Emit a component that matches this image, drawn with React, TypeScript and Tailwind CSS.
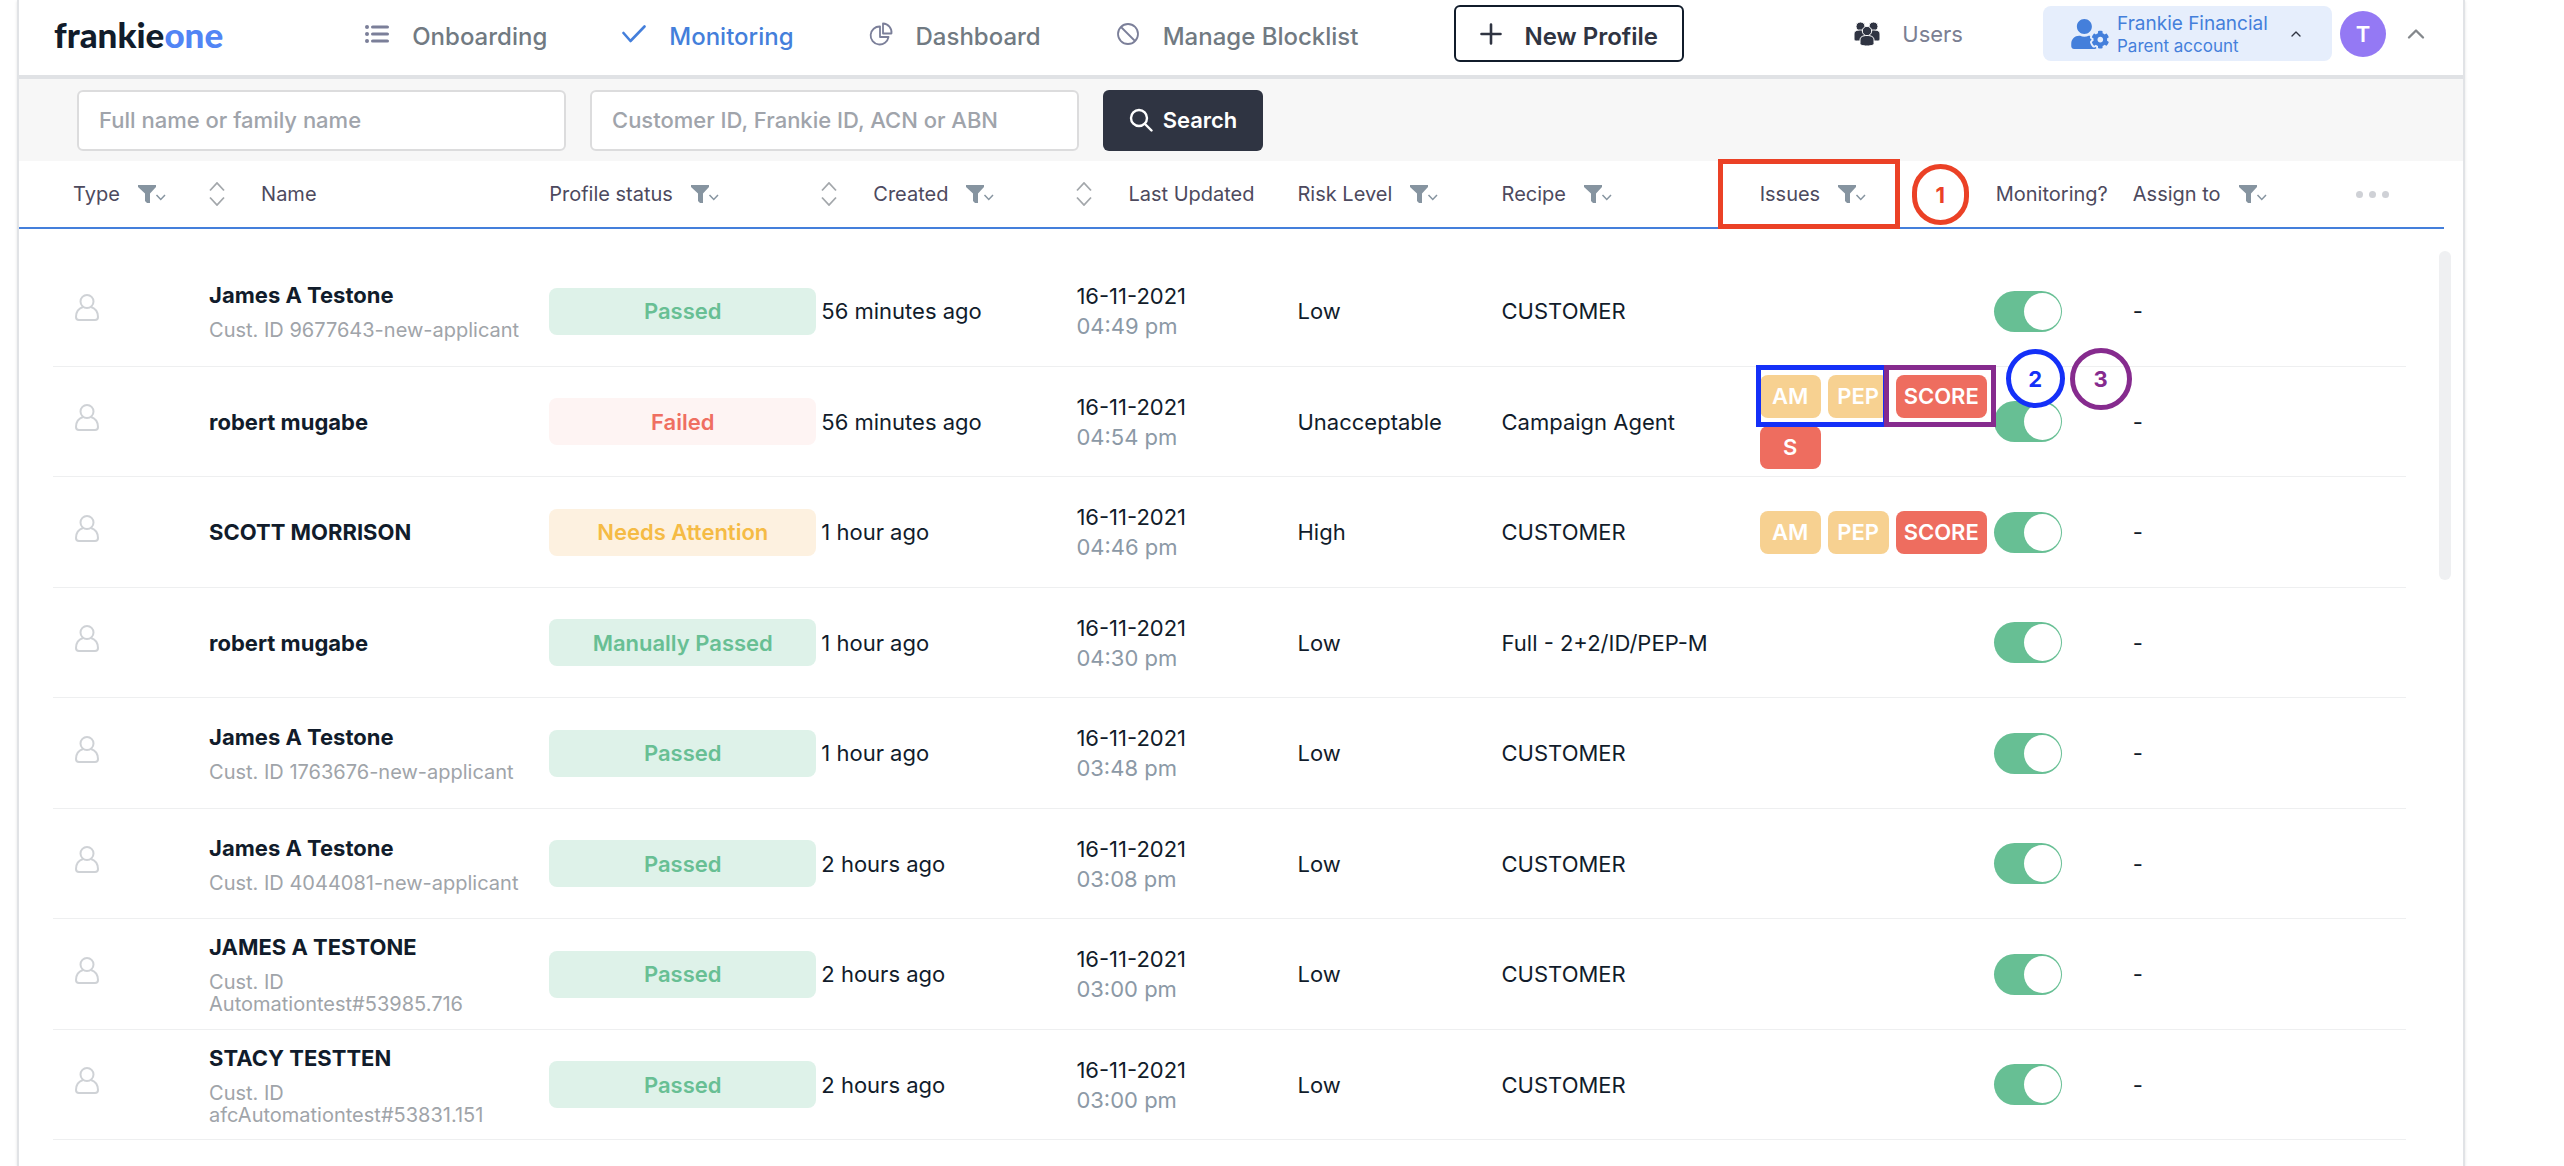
import type { ReactNode } from "react";
import { ChevronUp } from "lucide-react";
import { FaUserCog } from "react-icons/fa";
import clsx from "clsx";

type Status = "Passed" | "Failed" | "Needs Attention" | "Manually Passed";

interface Profile {
  name: string;
  customerId?: string;
  status: Status;
  created: string;
  updatedAt: string;
  risk: string;
  recipe: string;
  issues?: string[];
  annotated?: boolean;
}

const profiles: Profile[] = [
  { name: "James A Testone", customerId: "9677643-new-applicant", status: "Passed", created: "56 minutes ago", updatedAt: "04:49 pm", risk: "Low", recipe: "CUSTOMER" },
  { name: "robert mugabe", status: "Failed", created: "56 minutes ago", updatedAt: "04:54 pm", risk: "Unacceptable", recipe: "Campaign Agent", issues: ["AM", "PEP", "SCORE", "S"], annotated: true },
  { name: "SCOTT MORRISON", status: "Needs Attention", created: "1 hour ago", updatedAt: "04:46 pm", risk: "High", recipe: "CUSTOMER", issues: ["AM", "PEP", "SCORE"] },
  { name: "robert mugabe", status: "Manually Passed", created: "1 hour ago", updatedAt: "04:30 pm", risk: "Low", recipe: "Full - 2+2/ID/PEP-M" },
  { name: "James A Testone", customerId: "1763676-new-applicant", status: "Passed", created: "1 hour ago", updatedAt: "03:48 pm", risk: "Low", recipe: "CUSTOMER" },
  { name: "James A Testone", customerId: "4044081-new-applicant", status: "Passed", created: "2 hours ago", updatedAt: "03:08 pm", risk: "Low", recipe: "CUSTOMER" },
  { name: "JAMES A TESTONE", customerId: "Automationtest#53985.716", status: "Passed", created: "2 hours ago", updatedAt: "03:00 pm", risk: "Low", recipe: "CUSTOMER" },
  { name: "STACY TESTTEN", customerId: "afcAutomationtest#53831.151", status: "Passed", created: "2 hours ago", updatedAt: "03:00 pm", risk: "Low", recipe: "CUSTOMER" },
];

const statusStyles: Record<Status, string> = {
  Passed: "bg-[#def2e9] text-[#68bf94]",
  "Manually Passed": "bg-[#def2e9] text-[#68bf94]",
  Failed: "bg-[#fef4f3] text-[#ef6f61]",
  "Needs Attention": "bg-[#fdf1e0] text-[#f5bb45]",
};

function ListIcon() {
  return (
    <svg viewBox="0 0 24 18" className="h-[18px] w-6" fill="#7b7f99">
      {[0, 7, 14].map((y) => (
        <g key={y}>
          <rect x="0" y={y} width="4" height="4" rx="2" />
          <rect x="6" y={y + 0.4} width="18" height="3.2" rx="1.6" />
        </g>
      ))}
    </svg>
  );
}

function CheckIcon() {
  return (
    <svg viewBox="0 0 24 18" className="h-[18px] w-6" fill="none" stroke="currentColor" strokeWidth="2.6" strokeLinecap="round" strokeLinejoin="round">
      <path d="M1.500 8l7 8L22.500 1.500" />
    </svg>
  );
}

function PieIcon() {
  return (
    <svg viewBox="0 0 24 24" className="size-6" fill="none" stroke="#7b7f99" strokeWidth="1.8" strokeLinejoin="round">
      <path d="M11 4.500A9 9 0 1 0 19.500 15H11z" />
      <path d="M14 1.500v10h8.500A9 9 0 0 0 14 1.500z" />
    </svg>
  );
}

function BlockIcon() {
  return (
    <svg viewBox="0 0 24 24" className="size-6" fill="none" stroke="#7b7f99" strokeWidth="1.8">
      <circle cx="12" cy="12" r="10" />
      <path d="M5 5l14 14" />
    </svg>
  );
}

function PlusIcon() {
  return (
    <svg viewBox="0 0 22 22" className="size-[22px]" fill="none" stroke="currentColor" strokeWidth="2.6" strokeLinecap="round">
      <path d="M11 1.500v19M1.500 11h19" />
    </svg>
  );
}

function UsersIcon() {
  return (
    <svg viewBox="0 0 26 24" className="h-6 w-[26px]" fill="#2f3442" stroke="#fff" strokeWidth="1">
      <circle cx="6.5" cy="4.5" r="4.5" />
      <circle cx="19.5" cy="4.5" r="4.5" />
      <path d="M0 12c0-3 2.500-4 6.500-4s6 1 6 4v7H2.500C1 19 0 18.500 0 17z" />
      <path d="M26 12c0-3-2.500-4-6.500-4s-6 1-6 4v7h10c1.500 0 2.500-.5 2.500-2z" />
      <circle cx="13" cy="9" r="4.700" />
      <path d="M6 18c0-3 2.500-4.500 7-4.500s7 1.500 7 4.500v3.500c0 1.500-2.500 2.500-7 2.500s-7-1-7-2.500z" />
    </svg>
  );
}

function SearchIcon() {
  return (
    <svg viewBox="0 0 24 24" className="size-6" fill="none" stroke="currentColor" strokeWidth="2.4" strokeLinecap="round">
      <circle cx="10" cy="10" r="8" />
      <path d="M16 16l6.500 6.500" />
    </svg>
  );
}

function PersonIcon() {
  return (
    <svg viewBox="0 0 24 27" className="h-[27px] w-6" fill="none" stroke="#cfd2d6" strokeWidth="2">
      <circle cx="12" cy="7.500" r="6.500" />
      <path d="M8 13C3.500 14.500 1 18 1 23c0 2 1 3 3 3h16c2 0 3-1 3-3 0-5-2.500-8.500-7-10" />
    </svg>
  );
}

function FilterButton({ label }: { label: string }) {
  return (
    <button aria-label={`Filter by ${label}`} className="ml-[18px] flex items-center">
      <svg viewBox="0 0 28 18" className="h-[18px] w-7">
        <path d="M0 0h18v2l-6 6.500V18H9l-2-2V8.500L0 2z" fill="#8694a0" />
        <path d="M18.500 10l4.250 4.500L27 10" fill="none" stroke="#8694a0" strokeWidth="1.5" />
      </svg>
    </button>
  );
}

function SortButton({ label }: { label: string }) {
  return (
    <button aria-label={`Sort by ${label}`} className="mr-9">
      <svg viewBox="0 0 16 24" className="h-6 w-4" fill="none" stroke="#a3a7ab" strokeWidth="1.8">
        <path d="M1 8.500L8 1l7 7.500M1 15.500L8 23l7-7.500" />
      </svg>
    </button>
  );
}

interface HeadCellProps {
  label: string;
  sort?: boolean;
  filter?: boolean;
  className?: string;
  children?: ReactNode;
}

function HeadCell({ label, sort, filter, className, children }: HeadCellProps) {
  return (
    <th className={clsx("relative border-b-2 border-[#447fdb] p-0 text-left font-normal", className)}>
      <div className="flex items-center">
        {sort && <SortButton label={label} />}
        <span className="whitespace-nowrap">{label}</span>
        {filter && <FilterButton label={label} />}
      </div>
      {children}
    </th>
  );
}

function IssueTag({ issue }: { issue: string }) {
  return (
    <span
      className={clsx(
        "flex h-[43px] min-w-[61px] items-center justify-center rounded-lg px-2 font-semibold text-white",
        issue.startsWith("S") ? "bg-[#ee6d5f]" : "bg-[#f7d191]"
      )}
    >
      {issue}
    </span>
  );
}

function ProfileRow({ profile }: { profile: Profile }) {
  const cell = "border-b border-[#eeeff0] p-0";

  return (
    <tr className="h-[111px] odd:h-[110px]">
      <td className="p-0" />
      <td className={clsx(cell, "pb-2 pl-[22px]")}>
        <PersonIcon />
      </td>
      <td className={clsx(cell, "pr-6")}>
        <div className="leading-7 font-bold">{profile.name}</div>
        {profile.customerId && (
          <div className="mt-2.5 text-[20px] leading-[22px] text-[#a0a4a9]">Cust. ID {profile.customerId}</div>
        )}
      </td>
      <td className={clsx(cell, "pr-[5px]")}>
        <div className={clsx("flex h-[47px] items-center justify-center rounded-lg font-semibold", statusStyles[profile.status])}>
          {profile.status}
        </div>
      </td>
      <td className={cell}>{profile.created}</td>
      <td className={cell}>
        <div>16-11-2021</div>
        <div className="text-[#8c99a6]">{profile.updatedAt}</div>
      </td>
      <td className={cell}>{profile.risk}</td>
      <td className={cell}>{profile.recipe}</td>
      <td className={clsx(cell, "relative")}>
        <div className="flex flex-wrap gap-x-[7px] gap-y-2">
          {profile.issues?.map((issue) => <IssueTag key={issue} issue={issue} />)}
        </div>
        {profile.annotated && (
          <>
            <div className="absolute -top-0.5 -left-1 z-10 h-[62px] w-[132px] border-5 border-[#1430f8]" />
            <div className="absolute -top-0.5 left-[124px] z-10 h-[62px] w-[112px] border-5 border-[#862b8e]" />
            <div className="absolute -top-[18px] left-[246px] z-10 flex size-[59px] items-center justify-center rounded-full border-5 border-[#1430f8] bg-white font-bold text-[#1430f8]">
              2
            </div>
            <div className="absolute -top-[19px] left-[310px] z-10 flex size-[62px] items-center justify-center rounded-full border-5 border-[#862b8e] font-bold text-[#862b8e]">
              3
            </div>
          </>
        )}
      </td>
      <td className={cell}>
        <label className="relative block h-[41px] w-[68px]">
          <input
            type="checkbox"
            defaultChecked
            aria-label={`Monitor ${profile.name}`}
            className="peer absolute inset-0 h-full w-full cursor-pointer appearance-none rounded-full bg-gray-300 checked:bg-[#67bf94]"
          />
          <span className="pointer-events-none absolute top-0.5 left-px size-[37px] rounded-full bg-white peer-checked:right-px peer-checked:left-auto" />
        </label>
      </td>
      <td className={cell}>-</td>
      <td className={cell} />
      <td className="p-0" />
    </tr>
  );
}

interface NavItemProps {
  label: string;
  icon: ReactNode;
  active?: boolean;
}

function NavItem({ label, icon, active }: NavItemProps) {
  return (
    <a href="#" className={clsx("flex items-center gap-[23px]", active ? "text-[#447fdb]" : "text-[#717a82]")}>
      {icon}
      <span className="pt-1.5 text-[24px] font-medium whitespace-nowrap">{label}</span>
    </a>
  );
}

const columnWidths = [34, 156, 340, 272, 255, 221, 204, 258, 234, 139, 223, 50, 38];

export default function App() {
  return (
    <div className="min-h-screen bg-white pr-[99px] pl-[17px] font-['Inter',sans-serif] text-[22px] leading-[30px] text-[#111c2b]">
      <div className="min-h-screen border-x-2 border-[#e1e3e6] shadow-sm">
        <header className="flex h-[79px] items-center border-b-4 border-[#e0e2e5] pr-[33px] pb-2 pl-[35px]">
          <a href="#" className="mr-[142px] font-['Lato',sans-serif] text-[35px] font-black">
            frankie<span className="text-[#5285f5]">one</span>
          </a>
          <nav className="flex items-center gap-[75px]">
            <NavItem label="Onboarding" icon={<ListIcon />} />
            <NavItem label="Monitoring" active icon={<CheckIcon />} />
            <NavItem label="Dashboard" icon={<PieIcon />} />
            <NavItem label="Manage Blocklist" icon={<BlockIcon />} />
          </nav>
          <button className="ml-24 flex h-[57px] items-center gap-[22px] rounded-md border-2 border-[#111c2b] px-6 text-[24px] font-semibold text-[#2f3442]">
            <PlusIcon />
            <span className="pt-1.5 whitespace-nowrap">New Profile</span>
          </button>
          <a href="#" className="ml-auto flex items-center gap-[22px] text-[#7b7f93]">
            <UsersIcon />
            Users
          </a>
          <button className="ml-20 flex h-[55px] w-[289px] items-center rounded-lg bg-[#e6eefc] pr-7 pl-7 text-left text-[#447fdb]">
            <FaUserCog className="mr-2 h-[30px] w-[38px]" />
            <span className="flex-1">
              <span className="block text-[19px] leading-6">Frankie Financial</span>
              <span className="block text-[17px] leading-5">Parent account</span>
            </span>
            <ChevronUp className="size-4 text-[#2f3442]" />
          </button>
          <div className="ml-2 flex size-[46px] items-center justify-center rounded-full bg-[#9479f4] font-semibold text-white">T</div>
          <button aria-label="Account menu" className="ml-4 text-[#84888c]">
            <ChevronUp className="size-7" />
          </button>
        </header>

        <form className="flex h-[82px] items-center gap-6 bg-[#f7f7f7] pl-[58px]">
          <input
            aria-label="Full name or family name"
            placeholder="Full name or family name"
            className="h-[61px] w-[489px] rounded-md border-2 border-[#dcdcdd] bg-white px-5 font-medium placeholder:text-[#a0a4ab]"
          />
          <input
            aria-label="Customer ID, Frankie ID, ACN or ABN"
            placeholder="Customer ID, Frankie ID, ACN or ABN"
            className="h-[61px] w-[489px] rounded-md border-2 border-[#dcdcdd] bg-white px-5 font-medium placeholder:text-[#a0a4ab]"
          />
          <button type="button" className="flex h-[61px] w-40 items-center justify-center gap-2.5 rounded-md bg-[#2f3442] font-semibold text-white">
            <SearchIcon />
            Search
          </button>
        </form>

        <div className="relative pr-[19px]">
          <table className="w-full table-fixed border-separate border-spacing-0">
            <colgroup>
              {columnWidths.map((width, i) => (
                <col key={i} style={{ width }} />
              ))}
            </colgroup>
            <thead className="text-[20px] text-[#4d4a5e]">
              <tr className="h-[68px]">
                <th className="border-b-2 border-[#447fdb] p-0" />
                <HeadCell label="Type" filter className="pl-5" />
                <HeadCell label="Name" sort />
                <HeadCell label="Profile status" filter />
                <HeadCell label="Created" sort filter />
                <HeadCell label="Last Updated" sort />
                <HeadCell label="Risk Level" filter />
                <HeadCell label="Recipe" filter />
                <HeadCell label="Issues" filter>
                  <div className="absolute -top-0.5 -left-[42px] z-10 h-[70px] w-[182px] border-5 border-[#eb4126]" />
                  <div className="absolute top-[3px] left-[152px] z-10 flex h-[61px] w-[57px] items-center justify-center rounded-full border-5 border-[#eb4126] text-[22px] font-bold text-[#eb4126]">
                    1
                  </div>
                </HeadCell>
                <HeadCell label="Monitoring?" className="pl-0.5" />
                <HeadCell label="Assign to" filter />
                <th className="border-b-2 border-[#447fdb] p-0">
                  <button aria-label="More columns" className="flex gap-1.5">
                    <span className="size-[7px] rounded-full bg-[#cfd1d6]" />
                    <span className="size-[7px] rounded-full bg-[#cfd1d6]" />
                    <span className="size-[7px] rounded-full bg-[#cfd1d6]" />
                  </button>
                </th>
                <th className="border-b-2 border-[#447fdb] p-0" />
              </tr>
            </thead>
            <tbody>
              <tr className="h-[27px]">
                <td colSpan={13} className="p-0" />
              </tr>
              {profiles.map((profile, i) => (
                <ProfileRow key={i} profile={profile} />
              ))}
            </tbody>
          </table>
          <div className="absolute top-[90px] right-3 h-[329px] w-3 rounded-full bg-[#eff0f2]" />
        </div>
      </div>
    </div>
  );
}
